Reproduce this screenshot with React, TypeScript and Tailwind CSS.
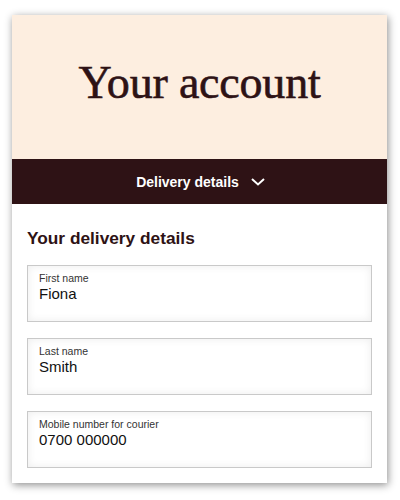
import React from 'react';

const fields = [
    { label: 'First name', value: 'Fiona' },
    { label: 'Last name', value: 'Smith' },
    { label: 'Mobile number for courier', value: '0700 000000' },
];

const Field: React.FC<{ label: string; value: string }> = ({ label, value }) => (
    <div className="h-[57px] border border-[#c9c9c9] bg-white pl-[11px] pt-[6px] shadow-[inset_0_0_8px_rgba(0,0,0,0.08)]">
        <div className="text-[10.5px] leading-[13px] text-[#333]">{label}</div>
        <div className="text-[15px] leading-[18px] text-[#111]">{value}</div>
    </div>
);

export default function App() {
    return (
        <div className="min-h-[500px] bg-white pl-[12px] pt-[15px] font-['Liberation_Sans',Arial,sans-serif]">
            <div className="flex h-[468px] w-[375px] flex-col bg-white shadow-[1px_2px_8px_rgba(0,0,0,0.45)]">
                {/* hero */}
                <div className="flex h-[144px] items-center justify-center bg-[#fdeee0] pb-[8px]">
                    <h1 className="font-['Liberation_Serif','Times_New_Roman',serif] text-[46px] leading-none tracking-[-0.2px] text-[#2e1215] [-webkit-text-stroke:0.6px_#2e1215]">
                        Your account
                    </h1>
                </div>

                {/* section switcher */}
                <div className="flex h-[45px] items-center justify-center gap-[12px] bg-[#2e1215] pt-[2px] pl-[2px]">
                    <span className="text-[14px] font-bold text-white">Delivery details</span>
                    <svg width="14" height="8" viewBox="0 0 14 8" fill="none" className="mt-[-1px]">
                        <path d="M1 1l6 5.5L13 1" stroke="white" strokeWidth="2" />
                    </svg>
                </div>

                <div className="px-[15px] pt-[22px]">
                    <h2 className="text-[17.3px] font-bold leading-[24px] text-[#2e1215]">Your delivery details</h2>
                    <div className="mt-[15px] flex flex-col gap-[16px]">
                        {fields.map(f => (
                            <Field key={f.label} label={f.label} value={f.value} />
                        ))}
                    </div>
                </div>
            </div>
        </div>
    );
}
